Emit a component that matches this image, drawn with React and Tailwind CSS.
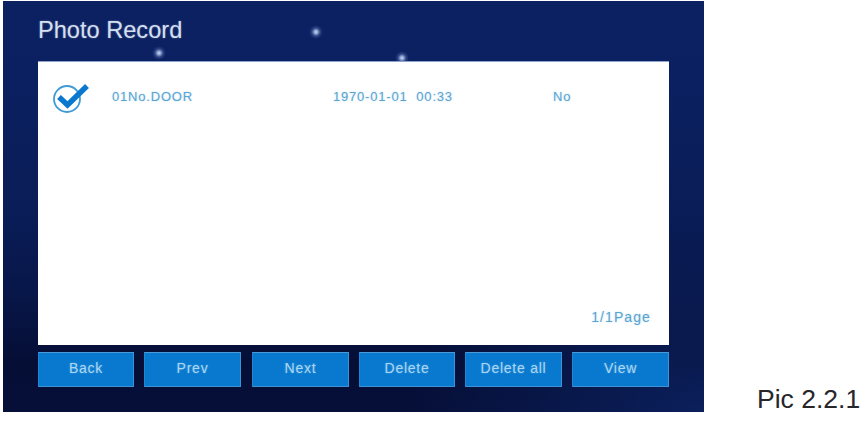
const F = { fontFamily: '"Liberation Sans", Arial, sans-serif' };

function Star({ className }) {
  return (
    <div className={`absolute w-[14px] h-[14px] rounded-full bg-[radial-gradient(circle,#c9d5ee_0%,#9fb3dc_14%,rgba(100,130,195,0.35)_42%,rgba(60,90,170,0)_70%)] ${className}`} />
  );
}

function Btn({ label, w }) {
  return (
    <div className={`${w} h-[35px] flex items-center justify-center bg-[#0879cf] border border-[#3d93d3] border-l-[#1f86d2] border-t-[#4a9ad6] text-[14px] tracking-[0.75px] text-[#a9d6f2] pb-[2px] [text-shadow:0_0_2px_rgba(169,214,242,0.45)]`}>
      {label}
    </div>
  );
}

export default function App() {
  return (
    <div className="w-[865px] h-[422px] bg-white flex pl-[3px] pt-px overflow-hidden" style={F}>
      <div className="relative w-[701px] h-[411px] shrink-0 flex flex-col px-[35px] bg-[linear-gradient(180deg,#0b2161_0%,#0b2060_20%,#0a1d58_50%,#08174a_70%,#050e35_88%,#060f38_100%)]">
        <div className="absolute inset-0 bg-[radial-gradient(ellipse_at_100%_100%,rgba(14,40,110,0.65)_0%,rgba(14,40,110,0)_30%)]" />
        <Star className="left-[149px] top-[45px]" />
        <Star className="left-[306px] top-[24px]" />
        <Star className="left-[392px] top-[50px]" />
        <div className="relative h-[60px] pt-[14px] text-[23.6px] leading-[30px] text-[#d4dff0] [text-shadow:0_0_2px_rgba(212,223,240,0.4)]">Photo Record</div>
        <div className="relative h-[284px] bg-white border-t border-[#8da2cc] flex flex-col text-[13px] tracking-[0.8px] text-[#5aa5d2] [text-shadow:0_0_2px_rgba(90,165,210,0.4)]">
          <div className="flex items-center h-[69px]">
            <svg className="ml-[14px] mt-[5px] w-[38px] h-[36px]" viewBox="0 0 38 36" fill="none">
              <circle cx="15" cy="18" r="13" stroke="#3f9ad8" strokeWidth="1.8" />
              <path d="M7 16l8.500 8L35 5" stroke="#0b78cf" strokeWidth="5.500" />
            </svg>
            <span className="ml-[22px] w-[221px]">01No.DOOR</span>
            <span className="w-[220px] whitespace-pre">1970-01-01  00:33</span>
            <span>No</span>
          </div>
          <div className="mt-auto mb-[17px] mr-[18px] text-right text-[14px] tracking-[1.1px]">1/1Page</div>
        </div>
        <div className="relative mt-[7px] flex gap-[10px]">
          <Btn label="Back" w="w-[96px]" />
          <Btn label="Prev" w="w-[97px]" />
          <Btn label="Next" w="w-[97px] ml-px" />
          <Btn label="Delete" w="w-[96px]" />
          <Btn label="Delete all" w="w-[97px]" />
          <Btn label="View" w="w-[97px]" />
        </div>
      </div>
      <div className="ml-[53px] mt-[383px] text-[26.5px] leading-[30px] text-[#26262b] whitespace-nowrap">Pic 2.2.1</div>
    </div>
  );
}
